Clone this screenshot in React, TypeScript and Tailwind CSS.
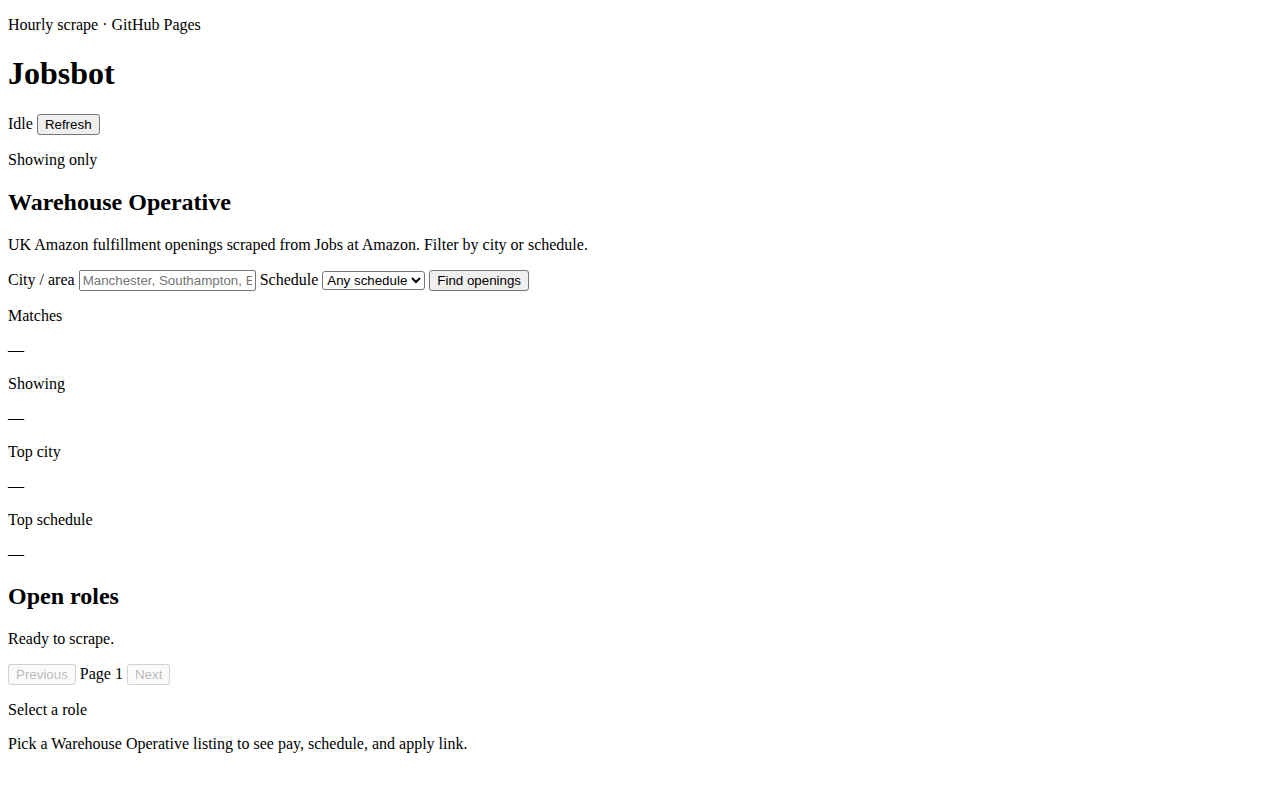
import React from 'react';

// Plain document look: browser defaults rebuilt on top of preflight
const btn =
  "inline-block bg-[#efefef] border border-[#767676] rounded-[3px] px-[7px] py-[2px] text-[13.333px] leading-[normal] font-['Liberation_Sans',Arial,sans-serif] text-black";
const btnOff =
  "inline-block bg-[#efefef]/30 border border-[#767676]/30 rounded-[3px] px-[7px] py-[2px] text-[13.333px] leading-[normal] font-['Liberation_Sans',Arial,sans-serif] text-[#101010]/30";

const STATS = ['Matches', 'Showing', 'Top city', 'Top schedule'];

export default function App() {
  return (
    <div className="min-h-screen bg-white text-black px-2 py-px font-['Liberation_Serif','Times_New_Roman',serif] text-[16px] leading-[normal]">
      <div className="-mt-px">
        <p className="my-4">Hourly scrape · GitHub Pages</p>
        <h1 className="my-[21.44px] text-[32px] leading-[normal] font-bold">Jobsbot</h1>
        <p className="my-4">
          Idle{' '}
          <button type="button" className={btn}>
            Refresh
          </button>
        </p>
        <p className="my-4">Showing only</p>

        <h2 className="my-[19.92px] text-[24px] leading-[normal] font-bold">Warehouse Operative</h2>
        <p className="my-4">
          UK Amazon fulfillment openings scraped from Jobs at Amazon. Filter by city or schedule.
        </p>
        <form className="my-4" onSubmit={(e) => e.preventDefault()}>
          <label>
            City / area{' '}
            <input
              type="text"
              placeholder="Manchester, Southampton, Edinburgh"
              className="inline-block w-[177px] border border-[#767676] rounded-[2px] bg-white px-[3px] py-[2px] text-[13.333px] leading-[normal] font-['Liberation_Sans',Arial,sans-serif] placeholder:text-[#757575]"
            />
          </label>{' '}
          <label>
            Schedule{' '}
            <select className="inline-block border border-[#767676] rounded-[3px] bg-white text-[13.333px] leading-[normal] font-['Liberation_Sans',Arial,sans-serif]">
              <option>Any schedule</option>
              <option>Full time</option>
              <option>Part time</option>
              <option>Flex</option>
            </select>
          </label>{' '}
          <button type="submit" className={btn}>
            Find openings
          </button>
        </form>

        {STATS.map((s) => (
          <div key={s}>
            <p className="my-4">{s}</p>
            <p className="my-4">—</p>
          </div>
        ))}

        <h2 className="my-[19.92px] text-[24px] leading-[normal] font-bold">Open roles</h2>
        <p className="my-4">Ready to scrape.</p>
        <div className="my-4">
          <button type="button" disabled className={btnOff}>
            Previous
          </button>{' '}
          Page 1{' '}
          <button type="button" disabled className={btnOff}>
            Next
          </button>
        </div>
        <p className="my-4">Select a role</p>
        <p className="my-4">Pick a Warehouse Operative listing to see pay, schedule, and apply link.</p>
      </div>
    </div>
  );
}
